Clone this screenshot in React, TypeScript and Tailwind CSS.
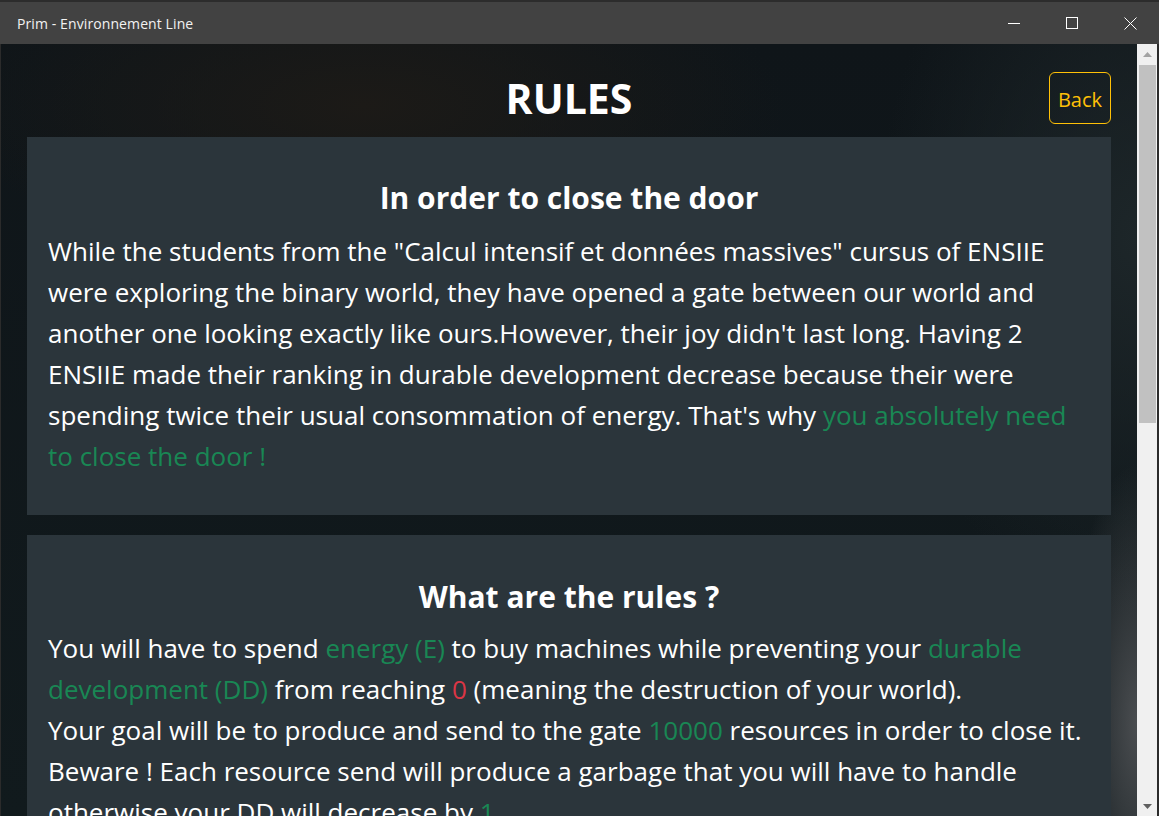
import React from "react";

function G({ children }: { children: React.ReactNode }) {
  return <span className="text-[#198754]">{children}</span>;
}

function R({ children }: { children: React.ReactNode }) {
  return <span className="text-[#dc3545]">{children}</span>;
}

function Line({ children }: { children: React.ReactNode }) {
  return <span className="block whitespace-nowrap">{children}</span>;
}

export default function App() {
  return (
    <div className="w-[1159px] h-[816px] overflow-hidden flex flex-col bg-[#2b2b2b] font-['Open_Sans','Noto_Sans',sans-serif]">
      {/* Title bar */}
      <div className="h-[44px] shrink-0 flex items-center bg-[#424242] border-t-2 border-[#2c2c2c]">
        <span className="flex-1 pl-[17px] text-[14px] text-[#f2f2f2] tracking-[0.1px]">
          Prim - Environnement Line
        </span>
        <div className="flex h-full">
          <div className="w-[58px] h-full flex items-center justify-center">
            <svg width="12" height="12" viewBox="0 0 12 12">
              <line x1="0" y1="6.5" x2="12" y2="6.5" stroke="#ffffff" strokeWidth="1" />
            </svg>
          </div>
          <div className="w-[58px] h-full flex items-center justify-center">
            <svg width="12" height="12" viewBox="0 0 12 12">
              <rect x="0.5" y="0.5" width="11" height="11" fill="none" stroke="#ffffff" strokeWidth="1" />
            </svg>
          </div>
          <div className="w-[58px] h-full flex items-center justify-center">
            <svg width="13" height="13" viewBox="0 0 13 13">
              <path d="M0.5 0.5 L12.5 12.5 M12.5 0.5 L0.5 12.5" stroke="#ffffff" strokeWidth="1" />
            </svg>
          </div>
        </div>
      </div>

      {/* Window body */}
      <div className="flex-1 flex min-h-0 pl-px pr-[2px] bg-[#2b2b2b]">
        <div className="flex-1 min-w-0 overflow-hidden px-[26px] bg-[#0f1619] bg-[radial-gradient(ellipse_70px_260px_at_100%_88%,#4a4d50_0%,rgba(74,77,80,0)_100%),radial-gradient(ellipse_420px_160px_at_32%_8%,#1c1a17_0%,rgba(28,26,23,0)_100%),radial-gradient(ellipse_260px_380px_at_100%_25%,#1d2629_0%,rgba(29,38,41,0)_100%),linear-gradient(180deg,#0f1519_0%,#111a1d_100%)]">
          {/* Header */}
          <div className="h-[93px] grid grid-cols-[1fr_auto_1fr] items-end pb-[13px]">
            <div />
            <h1 className="text-[41px] leading-[52px] font-bold text-white pt-[2px]">RULES</h1>
            <div className="flex justify-end">
              <button className="h-[52px] px-[8px] border border-[#ffc107] rounded-[6px] text-[#ffc107] text-[20px] leading-none pt-[3px]">
                Back
              </button>
            </div>
          </div>

          {/* Card 1 */}
          <div className="bg-[#2b353b] pt-[42px] pb-[38px] px-[21px] text-white">
            <h2 className="text-center text-[30px] leading-[38px] font-bold mb-[14px]">
              In order to close the door
            </h2>
            <p className="text-[26px] leading-[41px]">
              <Line>While the students from the "Calcul intensif et données massives" cursus of ENSIIE</Line>
              <Line>were exploring the binary world, they have opened a gate between our world and</Line>
              <Line>another one looking exactly like ours.However, their joy didn't last long. Having 2</Line>
              <Line>ENSIIE made their ranking in durable development decrease because their were</Line>
              <Line>
                spending twice their usual consommation of energy. That's why <G>you absolutely need</G>
              </Line>
              <Line>
                <G>to close the door !</G>
              </Line>
            </p>
          </div>

          {/* Card 2 */}
          <div className="mt-[20px] bg-[#2b353b] pt-[43px] pb-[38px] px-[21px] text-white">
            <h2 className="text-center text-[30px] leading-[38px] font-bold mb-[12px]">
              What are the rules ?
            </h2>
            <p className="text-[26px] leading-[41px]">
              <Line>
                You will have to spend <G>energy (E)</G> to buy machines while preventing your <G>durable</G>
              </Line>
              <Line>
                <G>development (DD)</G> from reaching <R>0</R> (meaning the destruction of your world).
              </Line>
              <Line>
                Your goal will be to produce and send to the gate <G>10000</G> resources in order to close it.
              </Line>
              <Line>Beware ! Each resource send will produce a garbage that you will have to handle</Line>
              <Line>
                otherwise your DD will decrease by <G>1</G>.
              </Line>
            </p>
          </div>
        </div>

        {/* Scrollbar */}
        <div className="w-[20px] shrink-0 bg-[#f0f0f0] flex flex-col items-center">
          <div className="h-[21px] w-full flex items-center justify-center">
            <svg width="9" height="5" viewBox="0 0 9 5">
              <path d="M4.5 0 L9 5 L0 5 Z" fill="#a3a3a3" />
            </svg>
          </div>
          <div className="w-[17px] h-[358px] bg-[#c1c1c1]" />
          <div className="flex-1" />
          <div className="h-[20px] w-full flex items-center justify-center">
            <svg width="9" height="5" viewBox="0 0 9 5">
              <path d="M0 0 L9 0 L4.5 5 Z" fill="#606060" />
            </svg>
          </div>
        </div>
      </div>
    </div>
  );
}
